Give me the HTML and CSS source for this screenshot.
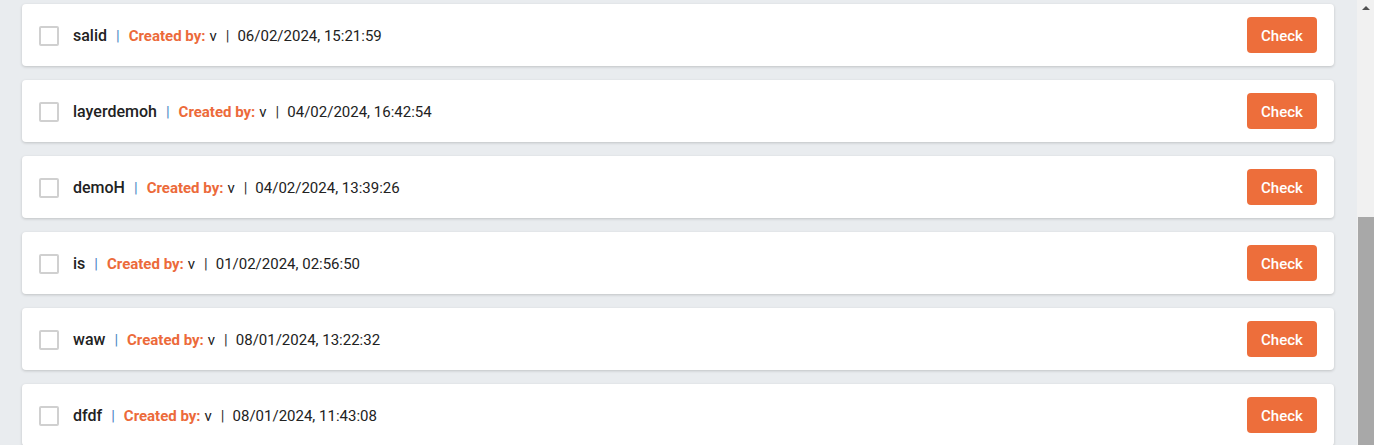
FILE: index.html
```html
<!DOCTYPE html>
<html>
<head>
<meta charset="utf-8">
<link rel="stylesheet" href="styles.css">
</head>
<body>
<div class="page">
  <div class="list">
    <div class="card">
      <div class="info"><span class="box"></span><span class="name">salid</span><span class="sep sep-a">|</span><span class="by">Created by:</span><span class="user">v</span><span class="sep sep-b">|</span><span class="date">06/02/2024, 15:21:59</span></div>
      <button class="check">Check</button>
    </div>
    <div class="card">
      <div class="info"><span class="box"></span><span class="name">layerdemoh</span><span class="sep sep-a">|</span><span class="by">Created by:</span><span class="user">v</span><span class="sep sep-b">|</span><span class="date">04/02/2024, 16:42:54</span></div>
      <button class="check">Check</button>
    </div>
    <div class="card">
      <div class="info"><span class="box"></span><span class="name">demoH</span><span class="sep sep-a">|</span><span class="by">Created by:</span><span class="user">v</span><span class="sep sep-b">|</span><span class="date">04/02/2024, 13:39:26</span></div>
      <button class="check">Check</button>
    </div>
    <div class="card">
      <div class="info"><span class="box"></span><span class="name">is</span><span class="sep sep-a">|</span><span class="by">Created by:</span><span class="user">v</span><span class="sep sep-b">|</span><span class="date">01/02/2024, 02:56:50</span></div>
      <button class="check">Check</button>
    </div>
    <div class="card">
      <div class="info"><span class="box"></span><span class="name">waw</span><span class="sep sep-a">|</span><span class="by">Created by:</span><span class="user">v</span><span class="sep sep-b">|</span><span class="date">08/01/2024, 13:22:32</span></div>
      <button class="check">Check</button>
    </div>
    <div class="card">
      <div class="info"><span class="box"></span><span class="name">dfdf</span><span class="sep sep-a">|</span><span class="by">Created by:</span><span class="user">v</span><span class="sep sep-b">|</span><span class="date">08/01/2024, 11:43:08</span></div>
      <button class="check">Check</button>
    </div>
  </div>
  <div class="scrollbar">
    <div class="arrow"></div>
    <div class="thumb"></div>
  </div>
</div>
</body>
</html>
```
FILE: styles.css
```css
html, body {
  margin: 0;
  padding: 0;
  height: 100%;
  overflow: hidden;
}
body {
  background: #e9ecef;
  font-family: Roboto, "Liberation Sans", sans-serif;
  color: #222;
}
.page {
  display: flex;
  height: 445px;
}
.list {
  flex: 1;
  display: flex;
  flex-direction: column;
  gap: 14px;
  padding: 4px 23px 0 22px;
  overflow: hidden;
}
.card {
  flex: 0 0 62px;
  background: #fff;
  border-radius: 4px;
  box-shadow: 0 1px 3px rgba(0, 0, 0, 0.18);
  display: flex;
  align-items: center;
  justify-content: space-between;
  padding: 0 17px;
  box-sizing: border-box;
}
.info {
  display: flex;
  align-items: center;
  font-size: 15px;
  padding-top: 1px;
}
.box {
  width: 20px;
  height: 20px;
  box-sizing: border-box;
  border: 2px solid #d0d0d0;
  border-radius: 2px;
  margin-right: 14px;
}
.name {
  font-size: 16px;
  font-weight: 500;
  color: #222;
}
.sep {
  margin: 0 9px;
}
.sep-a { color: #4a86c5; }
.sep-b { color: #333; margin: 0 8px 0 9px; }
.by {
  font-weight: 700;
  color: #ec6a3a;
  margin-right: 4px;
}
.user, .date {
  color: #222;
}
.check {
  width: 70px;
  height: 36px;
  border: none;
  border-radius: 4px;
  background: #ed6e3b;
  color: #fff;
  font-family: Roboto, "Liberation Sans", sans-serif;
  font-size: 15px;
  font-weight: 500;
  padding: 1px 0 0;
}
.scrollbar {
  flex: 0 0 17px;
  background: #f1f1f1;
  display: flex;
  flex-direction: column;
  align-items: center;
}
.arrow {
  margin-top: 6px;
  width: 0;
  height: 0;
  border-left: 4px solid transparent;
  border-right: 4px solid transparent;
  border-bottom: 4px solid #505050;
}
.thumb {
  margin-top: 207px;
  width: 16px;
  align-self: flex-end;
  flex: 1;
  background: #a8a8a8;
}
```
